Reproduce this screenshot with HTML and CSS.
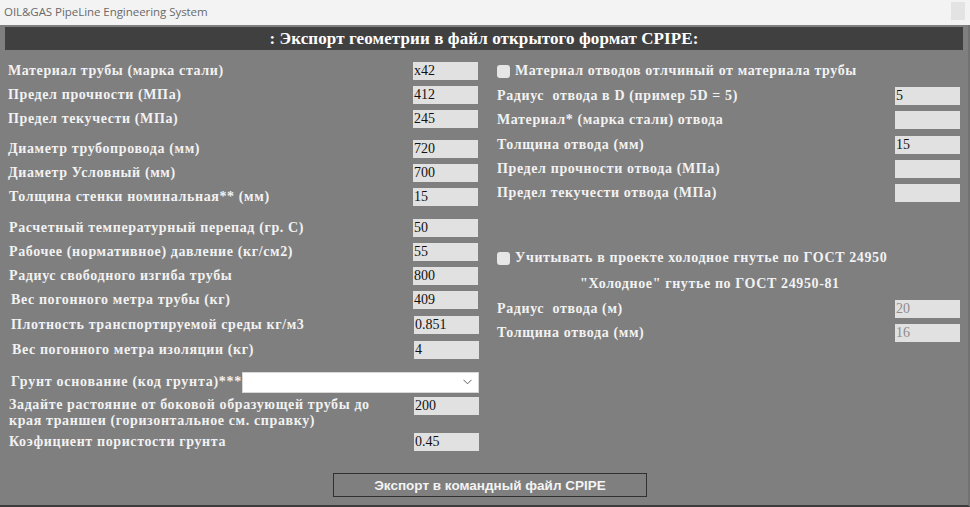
FILE: index.html
```html
<!DOCTYPE html>
<html lang="ru">
<head>
<meta charset="utf-8">
<title>OIL&amp;GAS PipeLine Engineering System</title>
<link rel="stylesheet" href="styles.css">
</head>
<body>
<div class="app">
  <div class="titlebar">
    <span class="app-title">OIL&amp;GAS PipeLine Engineering System</span>
    <span class="close-btn"></span>
  </div>
  <div class="window">
    <div class="header">: Экспорт геометрии в файл открытого формат CPIPE:</div>
    <div class="content">
      <div class="col-left">
        <div class="row"><span class="lbl">Материал трубы (марка стали)</span><span class="fld">x42</span></div>
        <div class="row"><span class="lbl">Предел прочности (МПа)</span><span class="fld">412</span></div>
        <div class="row"><span class="lbl">Предел текучести (МПа)</span><span class="fld">245</span></div>
        <div class="row gap6"><span class="lbl">Диаметр трубопровода (мм)</span><span class="fld">720</span></div>
        <div class="row"><span class="lbl">Диаметр Условный (мм)</span><span class="fld">700</span></div>
        <div class="row"><span class="lbl ind1">Толщина стенки номинальная** (мм)</span><span class="fld">15</span></div>
        <div class="row gap7"><span class="lbl ind1">Расчетный температурный перепад (гр. С)</span><span class="fld">50</span></div>
        <div class="row"><span class="lbl ind1">Рабочее (нормативное) давление (кг/см2)</span><span class="fld">55</span></div>
        <div class="row"><span class="lbl ind1">Радиус свободного изгиба трубы</span><span class="fld">800</span></div>
        <div class="row"><span class="lbl ind3">Вес погонного метра трубы (кг)</span><span class="fld">409</span></div>
        <div class="row gap1"><span class="lbl ind3">Плотность транспортируемой среды кг/м3</span><span class="fld sh">0.851</span></div>
        <div class="row gap1"><span class="lbl ind4">Вес погонного метра изоляции (кг)</span><span class="fld sh">4</span></div>
        <div class="row gap8 row-select"><span class="lbl ind3 wide">Грунт основание (код грунта)***</span><span class="select"><svg width="9" height="6" viewBox="0 0 9 6"><path d="M0.5 0.8 L4.5 4.8 L8.5 0.8" fill="none" stroke="#606060" stroke-width="1"/></svg></span></div>
        <div class="row row-two"><span class="lbl ind1 wrap">Задайте растояние от боковой образующей трубы до края траншеи (горизонтальное см. справку)</span><span class="fld sh">200</span></div>
        <div class="row gap3"><span class="lbl ind1">Коэфициент пористости грунта</span><span class="fld sh">0.45</span></div>
      </div>
      <div class="col-right">
        <div class="row chk-row"><span class="chk"></span><span class="lbl">Материал отводов отлчиный от материала трубы</span></div>
        <div class="row"><span class="lbl">Радиус&nbsp; отвода в D (пример 5D = 5)</span><span class="fld">5</span></div>
        <div class="row"><span class="lbl">Материал* (марка стали) отвода</span><span class="fld"></span></div>
        <div class="row gap1"><span class="lbl">Толщина отвода (мм)</span><span class="fld">15</span></div>
        <div class="row"><span class="lbl">Предел прочности отвода (МПа)</span><span class="fld"></span></div>
        <div class="row"><span class="lbl">Предел текучести отвода (МПа)</span><span class="fld"></span></div>
        <div class="row chk-row chk2"><span class="chk"></span><span class="lbl">Учитывать в проекте холодное гнутье по ГОСТ 24950</span></div>
        <div class="row subtitle"><span class="lbl">"Холодное" гнутье по ГОСТ 24950-81</span></div>
        <div class="row"><span class="lbl">Радиус&nbsp; отвода (м)</span><span class="fld dis">20</span></div>
        <div class="row"><span class="lbl">Толщина отвода (мм)</span><span class="fld dis">16</span></div>
      </div>
    </div>
    <div class="actions">
      <span class="btn">Экспорт в командный файл CPIPE</span>
    </div>
  </div>
</div>
</body>
</html>
```
FILE: styles.css
```css
* { box-sizing: border-box; }
html, body { margin: 0; padding: 0; }
body { width: 970px; height: 507px; overflow: hidden; background: #7f7f7f; }
.app { width: 970px; height: 507px; display: flex; flex-direction: column; }
.titlebar {
  height: 25px; background: #f3f3f3; display: flex; align-items: center;
  justify-content: space-between; padding: 0 5px 0 4px;
}
.app-title { font-family: "Open Sans", sans-serif; font-size: 11.5px; color: #6a6a6a; letter-spacing: -0.05px; margin-top: -2px; }
.close-btn { width: 14px; height: 18px; background: #e3e3e3; align-self: flex-start; margin-top: 2px; }
.window {
  flex: 1; background: #7f7f7f; border-right: 2px solid #727272; border-bottom: 2px solid #3c3c3c;
  display: flex; flex-direction: column; padding: 2px 5px 0 5px;
}
.header {
  height: 23px; background: #404040; color: #fff; text-align: center;
  font-family: "Liberation Serif", "Times New Roman", serif; font-weight: bold; font-size: 17px;
  line-height: 23px; letter-spacing: 0.1px;
}
.content { display: grid; grid-template-columns: 487px 1fr; padding-top: 9px; }
.col-left { display: flex; flex-direction: column; padding-left: 3px; padding-right: 14px; }
.col-right { display: flex; flex-direction: column; padding-left: 5px; padding-right: 3px; }
.row { height: 24px; display: flex; align-items: center; justify-content: space-between; }
.lbl {
  font-family: "Liberation Serif", "Times New Roman", serif; font-weight: bold; font-size: 14px;
  color: #f2f2f2; white-space: nowrap; letter-spacing: 0.62px;
}
.lbl.wide { letter-spacing: 0.75px; }
.fld {
  width: 65px; height: 18px; background: #e1e1e1; color: #111; flex: none;
  font-family: "Liberation Serif", "Times New Roman", serif; font-size: 14px; line-height: 18px; padding-left: 1px;
}
.fld.sh { margin-right: -1px; }
.fld.dis { color: #8c8c8c; }
.ind1 { padding-left: 1px; }
.ind3 { padding-left: 3px; }
.ind4 { padding-left: 4px; }
.gap1 { margin-top: 1px; }
.gap3 { margin-top: 3px; }
.gap6 { margin-top: 6px; }
.gap7 { margin-top: 7px; }
.gap8 { margin-top: 8px; }
.row-select { justify-content: flex-start; }
.select {
  flex: 1; height: 21px; background: #fff; border: 1px solid #d8d8d8; margin-right: -1px;
  display: flex; align-items: center; justify-content: flex-end; padding-right: 6px;
}
.row-two { height: 30px; align-items: flex-start; margin-top: 3px; }
.lbl.wrap { white-space: normal; width: 392px; line-height: 16px; }
.chk-row { justify-content: flex-start; gap: 5px; margin-bottom: 1px; }
.chk { width: 13px; height: 13px; background: #e6e6e6; border-radius: 3px; flex: none; }
.chk2 { margin-top: 40px; margin-bottom: 0; height: 26px; }
.subtitle { justify-content: flex-start; padding-left: 83px; height: 26px; margin-bottom: 0; }
.actions { display: flex; justify-content: center; padding-top: 19px; padding-left: 12px; }
.btn {
  width: 314px; height: 24px; border: 1px solid #303030; color: #f4f4f4;
  font-family: "Liberation Sans", Arial, sans-serif; font-size: 13.5px; font-weight: bold;
  display: flex; align-items: center; justify-content: center;
}
```
